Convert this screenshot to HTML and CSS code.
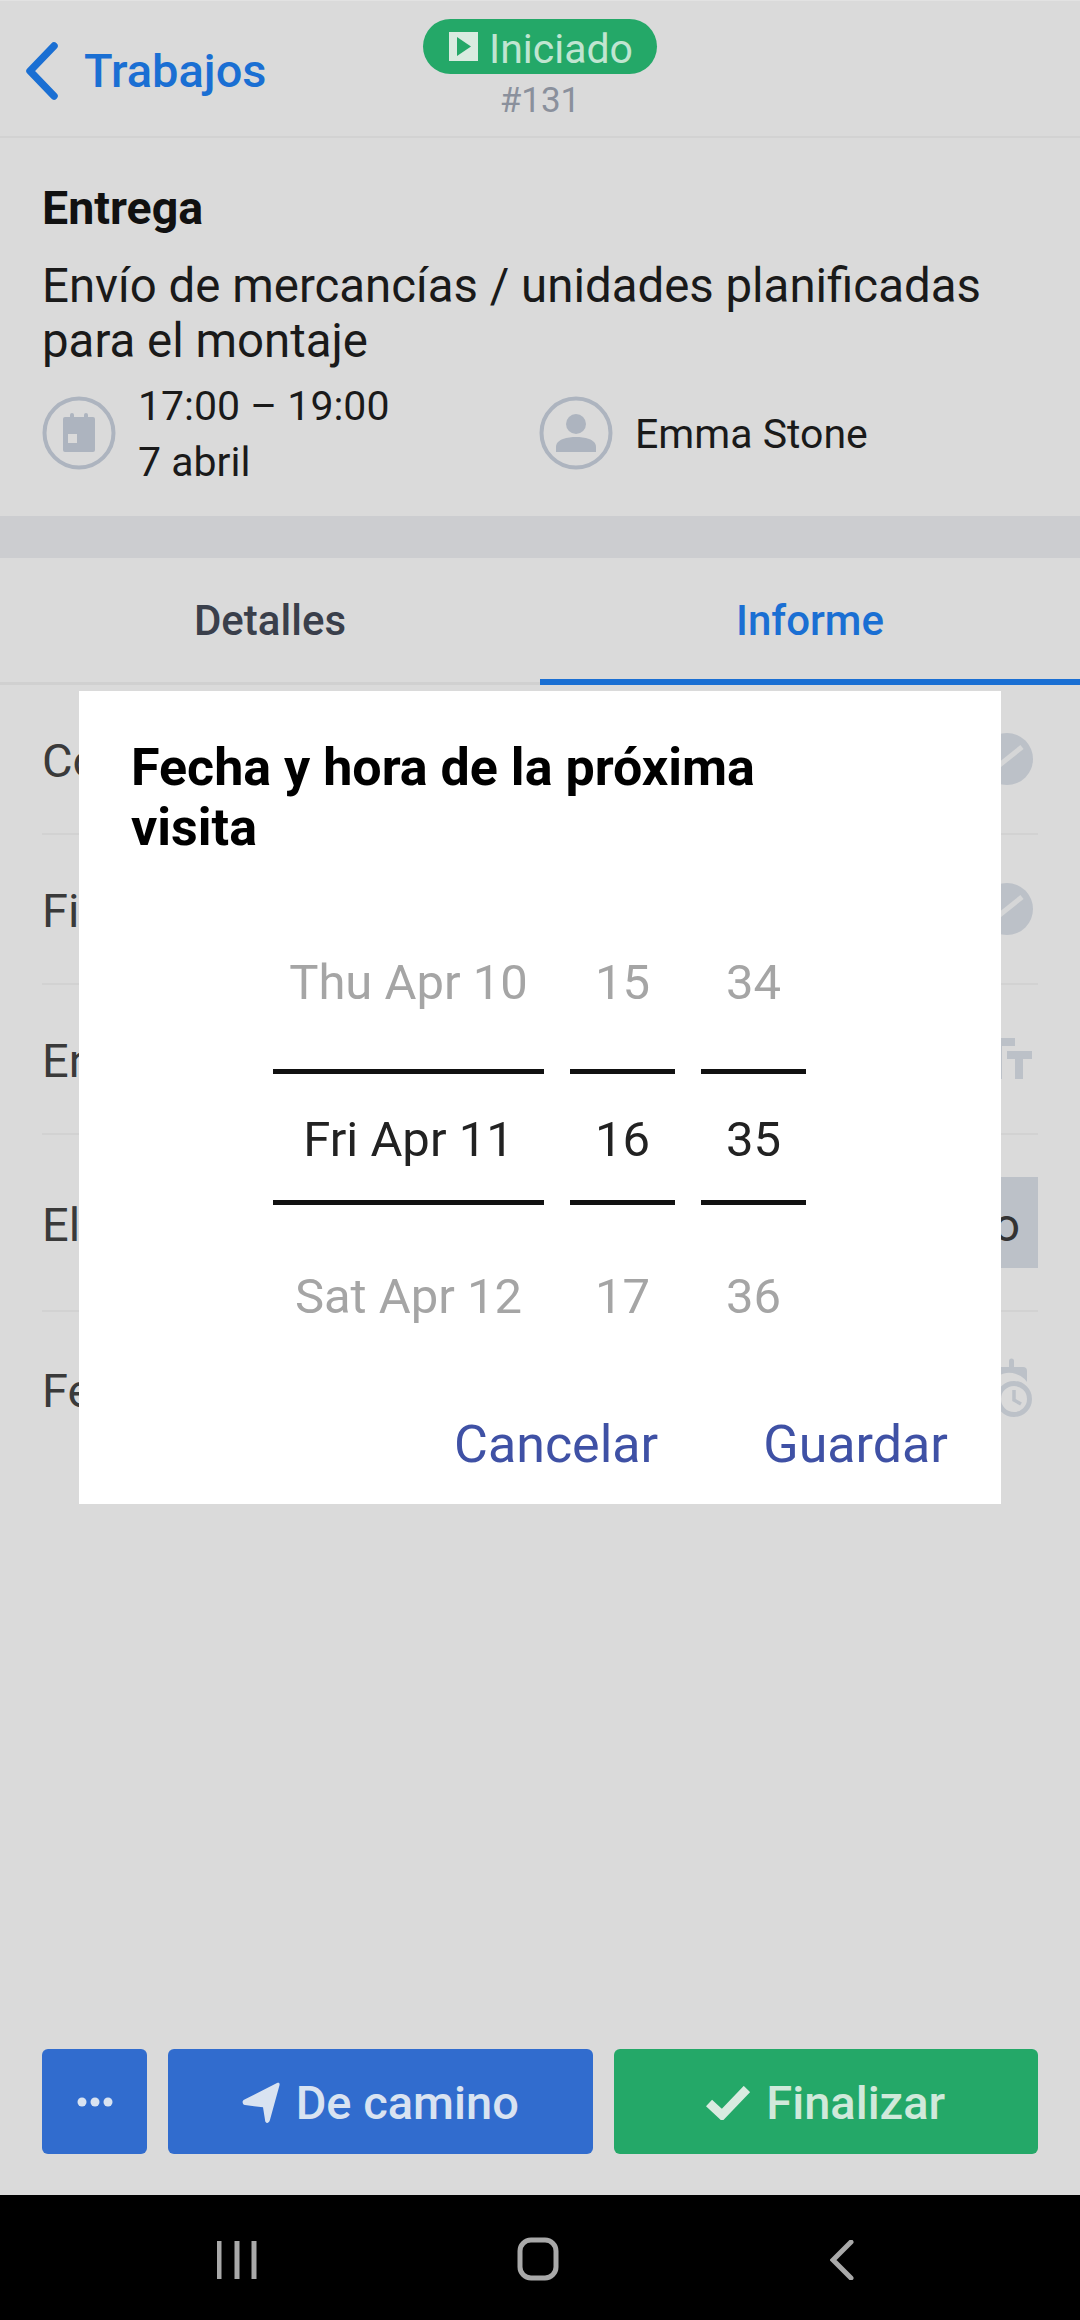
FILE: index.html
```html
<!DOCTYPE html>
<html lang="es">
<head>
<meta charset="utf-8">
<title>Trabajo #131</title>
<link rel="stylesheet" href="styles.css">
</head>
<body>
<div class="app">
  <header class="topbar">
    <a class="back">
      <svg class="back-icon" viewBox="0 0 36 58"><path d="M30 4 L6 29 L30 54" /></svg>
      <span>Trabajos</span>
    </a>
    <div class="status">
      <div class="pill">
        <svg class="play" viewBox="0 0 29 29"><rect width="29" height="29" fill="#d9ebe0"/><path d="M8 5 L22 14.5 L8 24 Z" fill="#24a868"/></svg>
        <span>Iniciado</span>
      </div>
      <div class="job-no">#131</div>
    </div>
  </header>

  <section class="job">
    <h1 class="job-type">Entrega</h1>
    <p class="job-desc">Envío de mercancías / unidades planificadas para el montaje</p>
    <div class="meta">
      <div class="meta-item meta-time">
        <svg class="meta-icon" viewBox="0 0 74 74">
          <circle cx="37" cy="37" r="34.5" class="ring"/>
          <path class="solid" d="M21 23 a2 2 0 0 1 2 -2 h5 v-2 a2 2 0 0 1 4 0 v2 h10 v-2 a2 2 0 0 1 4 0 v2 h5 a2 2 0 0 1 2 2 v31 a2 2 0 0 1 -2 2 h-28 a2 2 0 0 1 -2 -2 z"/>
          <rect x="26" y="38" width="9" height="9" fill="#dadada"/>
        </svg>
        <div class="meta-text">17:00 – 19:00<br>7 abril</div>
      </div>
      <div class="meta-item">
        <svg class="meta-icon" viewBox="0 0 74 74">
          <circle cx="37" cy="37" r="34.5" class="ring"/>
          <circle cx="37" cy="28" r="10" class="solid"/>
          <path class="solid" d="M17 56 v-5 c0 -8 12 -10 20 -10 s20 2 20 10 v5 z"/>
        </svg>
        <div class="meta-text">Emma Stone</div>
      </div>
    </div>
  </section>

  <div class="band"></div>

  <nav class="tabs">
    <div class="tab">Detalles</div>
    <div class="tab tab-active">Informe</div>
  </nav>

  <main class="rows">
    <div class="row">
      <span class="row-label">Co</span>
      <svg class="row-icon" viewBox="0 0 52 52"><circle cx="26" cy="26" r="26" class="solid-soft"/><path d="M11 38 L41 14" class="slash"/></svg>
    </div>
    <div class="row">
      <span class="row-label">Fi</span>
      <svg class="row-icon" viewBox="0 0 52 52"><circle cx="26" cy="26" r="26" class="solid-soft"/><path d="M11 38 L41 14" class="slash"/></svg>
    </div>
    <div class="row">
      <span class="row-label">En</span>
      <svg class="row-icon row-icon-text" viewBox="0 0 52 42"><path class="solid-soft" d="M0 0 H35 V8 H22 V41 H13 V8 H0 Z"/><path class="solid-soft" d="M27 13 H52 V21 H43 V41 H35 V21 H27 Z"/></svg>
    </div>
    <div class="row row-tall">
      <span class="row-label">El</span>
      <span class="picker-btn">o</span>
    </div>
    <div class="row row-last">
      <span class="row-label">Fe</span>
      <svg class="row-icon row-icon-cal" viewBox="0 0 52 62">
        <path class="solid-soft" d="M6 9 H26 V3 a2 2 0 0 1 5 0 V9 H40 a4 4 0 0 1 4 4 V24 A22 22 0 0 0 8 50 H6 a4 4 0 0 1 -4 -4 V13 a4 4 0 0 1 4 -4 Z"/>
        <circle cx="31" cy="41" r="15.5" class="clock-ring"/>
        <path d="M31 32 V42 L38 46" class="clock-hand"/>
      </svg>
    </div>
  </main>

  <footer class="actions">
    <button class="btn btn-more"><svg class="dots" viewBox="0 0 36 10"><circle cx="5" cy="5" r="4.5"/><circle cx="18" cy="5" r="4.5"/><circle cx="31" cy="5" r="4.5"/></svg></button>
    <button class="btn btn-go"><svg class="btn-icon" viewBox="0 0 38 40" preserveAspectRatio="none"><path d="M35 1 C37 0 38 1 37.500 3 L28 36 C27 40 23 40 23 36 L21 24 L3 22 C0 21 0 18 2 17 Z"/></svg><span>De camino</span></button>
    <button class="btn btn-done"><svg class="btn-icon btn-check" viewBox="0 0 44 34"><path d="M3 17 L16 29 L41 3"/></svg><span>Finalizar</span></button>
  </footer>

  <div class="navbar">
    <svg class="nav-recent" viewBox="0 0 40 40"><path d="M2 1 V39 M20 1 V39 M37 1 V39"/></svg>
    <svg class="nav-home" viewBox="0 0 42 44"><rect x="3" y="3" width="36" height="38" rx="11"/></svg>
    <svg class="nav-back" viewBox="0 0 24 40"><path d="M21 2 L3 20 L21 38"/></svg>
  </div>

  <div class="dialog">
    <h2 class="dialog-title">Fecha y hora de la próxima visita</h2>
    <div class="picker">
      <div class="wheel wheel-date">
        <div class="cell">Thu Apr 10</div>
        <div class="cell cell-current">Fri Apr 11</div>
        <div class="cell">Sat Apr 12</div>
      </div>
      <div class="wheel">
        <div class="cell">15</div>
        <div class="cell cell-current">16</div>
        <div class="cell">17</div>
      </div>
      <div class="wheel">
        <div class="cell">34</div>
        <div class="cell cell-current">35</div>
        <div class="cell">36</div>
      </div>
    </div>
    <div class="dialog-actions">
      <span class="dialog-btn">Cancelar</span>
      <span class="dialog-btn">Guardar</span>
    </div>
  </div>
</div>
</body>
</html>
```
FILE: styles.css
```css
* { box-sizing: border-box; }
html, body { margin: 0; padding: 0; }
body { font-family: Roboto, "Liberation Sans", sans-serif; background: #dadada; color: #111; }
h1, h2, p { margin: 0; font-weight: inherit; }

.app { position: relative; width: 1080px; height: 2320px; overflow: hidden; display: flex; flex-direction: column; background: #dadada; }

.solid { fill: #adb4bf; }
.solid-soft { fill: #bcc1c8; }
.ring { fill: none; stroke: #adb4bf; stroke-width: 4; }

.topbar { height: 138px; flex: none; display: flex; position: relative; border-bottom: 2px solid #d2d2d2; border-top: 1px solid #e2e2e2; }
.back { display: flex; align-items: center; padding: 3px 0 0 24px; gap: 24px; font-size: 47px; font-weight: 500; color: #1a6fd3; height: 136px; }
.back-icon { width: 36px; height: 58px; fill: none; stroke: #1a6fd3; stroke-width: 7.5; stroke-linecap: round; stroke-linejoin: round; }
.status { position: absolute; left: 423px; top: 18px; width: 234px; display: flex; flex-direction: column; align-items: center; }
.pill { width: 234px; height: 55px; border-radius: 28px; background: #24a868; color: #c0e5d1; font-size: 41px; display: flex; align-items: center; gap: 11px; padding-left: 26px; }
.pill span { position: relative; top: 2px; }
.play { width: 29px; height: 29px; flex: none; }
.job-no { margin-top: 8px; font-size: 35px; line-height: 38px; color: #8a909c; }

.job { height: 378px; flex: none; padding: 42px 43px 0 42px; }
.job-type { font-size: 46.5px; font-weight: 700; line-height: 56px; color: #111; }
.job-desc { margin-top: 23px; font-size: 47.4px; line-height: 55px; color: #1a1a1a; }
.meta { display: flex; margin-top: 6px; }
.meta-item { display: flex; align-items: center; gap: 22px; color: #1a1a1a; }
.meta-time { width: 497px; }
.meta-icon { width: 74px; height: 74px; flex: none; }
.meta-text { font-size: 41px; line-height: 56px; padding-top: 3px; }

.band { height: 42px; flex: none; background: #cccdd0; }

.tabs { height: 127px; flex: none; display: flex; border-bottom: 3px solid #d0d0d0; }
.tab { flex: 1; display: flex; align-items: center; justify-content: center; font-size: 42px; font-weight: 500; color: #3a3f4b; margin-bottom: -3px; padding-top: 6px; padding-bottom: 2px; border-bottom: 6px solid transparent; }
.tab-active { color: #1a6fd3; border-bottom-color: #1a6fd3; }

.rows { flex: 1; padding: 0 42px 0 42px; }
.row { height: 150px; display: flex; align-items: center; justify-content: space-between; border-bottom: 2px solid #d2d2d2; }
.row-tall { height: 177px; }
.row-last { height: 154px; border-bottom: 0; }
.row-label { font-size: 47px; color: #3a3a3a; white-space: nowrap; padding-top: 3px; }
.row-icon { width: 52px; height: 52px; margin-right: 5px; }
.row-icon-text { width: 52px; height: 42px; margin-right: 6px; }
.row-icon-cal { width: 52px; height: 62px; margin-right: 3px; }
.slash { stroke: #d5d6d7; stroke-width: 5; fill: none; }
.clock-ring { fill: #dadada; stroke: #bcc1c8; stroke-width: 5; }
.clock-hand { stroke: #bcc1c8; stroke-width: 3.500; fill: none; }
.picker-btn { height: 91px; width: 37px; display: flex; align-items: center; padding: 4px 0 0; background: #bcc1c8; font-size: 47px; color: #333; white-space: nowrap; justify-content: flex-end; padding-right: 18px; }

.actions { height: 146px; flex: none; display: flex; gap: 21px; padding: 0 42px; }
.btn { height: 105px; border: 0; border-radius: 6px; display: flex; align-items: center; justify-content: center; gap: 16px; font-family: inherit; font-size: 47px; font-weight: 500; padding: 2px 0 0; color: #d9e3f1; }
.btn-more { width: 105px; background: #316cce; padding: 0; }
.btn-go { flex: 1; background: #316cce; }
.btn-done { flex: 1; background: #24a868; color: #d0e9da; }
.dots { width: 36px; height: 10px; fill: #d9e3f1; }
.btn-icon { width: 38px; height: 42px; fill: #d9e3f1; flex: none; }
.btn-check { width: 44px; height: 34px; fill: none; stroke: #d9ebe0; stroke-width: 9; }

.navbar { height: 125px; flex: none; background: #000; position: relative; display: flex; }
.navbar svg { position: absolute; fill: none; stroke: #a9a9a9; }
.nav-recent { left: 217px; top: 45px; width: 40px; height: 40px; stroke-width: 5; }
.nav-home { left: 517px; top: 42px; width: 42px; height: 44px; stroke-width: 5; }
.nav-back { left: 830px; top: 45px; width: 24px; height: 40px; stroke-width: 5; stroke-linecap: round; }

.dialog { position: absolute; left: 79px; top: 691px; width: 922px; height: 813px; background: #fff; padding: 47px 53px 0 52px; }
.dialog-title { font-size: 52px; font-weight: 700; line-height: 60px; color: #000; width: 700px; }
.picker { display: flex; gap: 26px; margin-top: 54px; padding-left: 142px; }
.wheel { width: 105px; display: flex; flex-direction: column; gap: 21px; }
.wheel-date { width: 271px; }
.cell { height: 136px; display: flex; align-items: center; justify-content: center; font-size: 49px; color: #a5a5a5; white-space: nowrap; padding-top: 5px; }
.cell-current { color: #222; border-top: 5px solid #111; border-bottom: 5px solid #111; }
.dialog-actions { display: flex; justify-content: flex-end; gap: 105px; margin-top: 55px; }
.dialog-btn { font-size: 52px; line-height: 56px; color: #3f51a5; }
```
